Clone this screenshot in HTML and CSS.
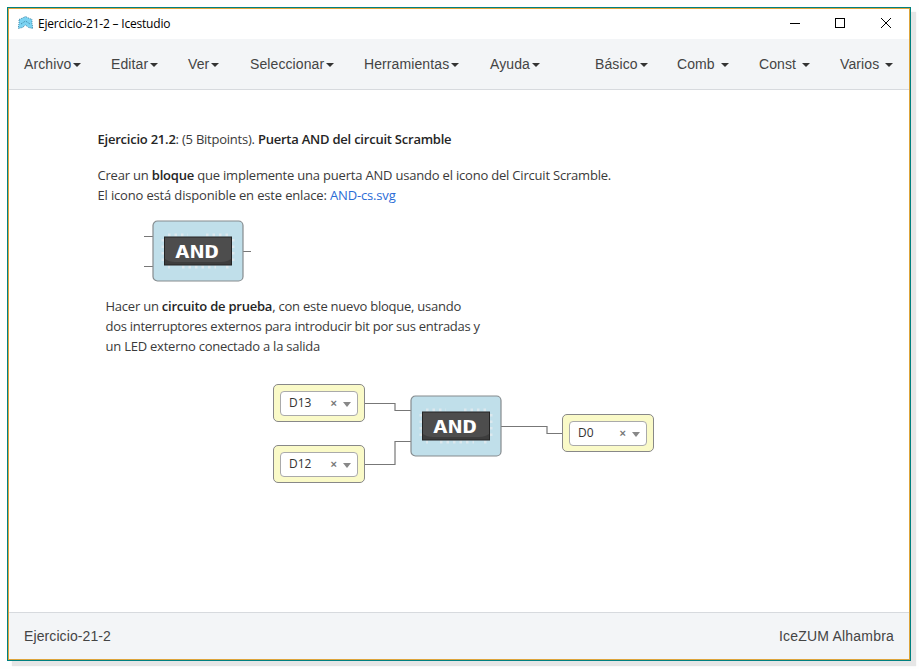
FILE: index.html
```html
<!DOCTYPE html>
<html lang="es">
<head>
<meta charset="utf-8">
<title>Ejercicio-21-2 – Icestudio</title>
<link rel="stylesheet" href="styles.css">
</head>
<body>
<div class="window">
  <header class="titlebar">
    <svg class="logo" width="15" height="13" viewBox="0 0 15 13">
      <path d="M1 3.500l3.500-1.500 3-1.500 3 1.500 3.500 1.500v4l1 5-4.500-1-3-2.500-3 2.500-4.500 1 1-5z" fill="#7bd3f2"/>
      <path d="M1 3.500l3.500-1.500 3-1.500 3 1.500 3.500 1.500v4l1 5-4.500-1-3-2.500-3 2.500-4.500 1 1-5zM3 8l4.500-3 4.500 3" fill="none" stroke="#286f92" stroke-width=".8" stroke-dasharray="1 1"/>
    </svg>
    <span class="title">Ejercicio-21-2 – Icestudio</span>
    <svg class="controls" width="104" height="14" viewBox="0 0 104 14" fill="none" stroke="#000">
      <path d="M0 7.500h10"/><rect x="45.500" y="2.500" width="9" height="9"/><path d="M91 2l10 10M101 2l-10 10"/>
    </svg>
  </header>
  <nav class="menu">
    <a>Archivo</a><a>Editar</a><a>Ver</a><a>Seleccionar</a><a>Herramientas</a><a>Ayuda</a>
    <a>Básico</a><a class="wide">Comb</a><a class="wide">Const</a><a class="wide">Varios</a>
  </nav>
  <main class="canvas">
    <p class="note title-note"><b>Ejercicio 21.2</b>: (5 Bitpoints). <b>Puerta AND del circuit Scramble</b></p>
    <p class="note intro">Crear un <b>bloque</b> que implemente una puerta AND usando el icono del Circuit Scramble.<br><span class="link-line">El icono está disponible en este enlace: <a>AND-cs.svg</a></span></p>
    <p class="note task">Hacer un <b>circuito de prueba</b>, con este nuevo bloque, usando<br><span class="long-line">dos interruptores externos para introducir bit por sus entradas y</span><br>un LED externo conectado a la salida</p>
    <svg class="wires" width="900" height="522" viewBox="9 90 900 522">
      <path d="M144 236.500h9M144 266.500h9M243 251.500h8M364 403.500h31v7h16M364 464.500h31v-23h16M501 426.500h46v7h16" fill="none" stroke="#777" stroke-width="1.200"/>
    </svg>
    <svg class="block sample" width="92" height="62" viewBox="0 0 92 62">
      <rect x="1" y="1" width="90" height="60" rx="4.500" fill="#c0dfea" stroke="#858b8e" stroke-width="1.200"/>
      <path d="M16 15h20M54 15h24M16 47h2M30 47h34M74 47h4" stroke="#dce8ed" stroke-width="3" stroke-dasharray="2.500 4"/>
      <path d="M11 19v26M81 19v26" stroke="#dce8ed" stroke-width="3" stroke-dasharray="2.500 4"/>
      <rect x="12.500" y="17" width="67" height="28" fill="#4d4d4d"/>
      <path d="M13 39q4 3 10 3h46q6 0 10-3v6H13z" fill="#3d3d3d"/>
      <rect x="12.500" y="17" width="67" height="28" fill="none" stroke="#242424"/>
      <text x="23" y="37.500" textLength="44" lengthAdjust="spacingAndGlyphs" class="and-text">AND</text>
    </svg>
    <svg class="block gate" width="92" height="62" viewBox="0 0 92 62">
      <rect x="1" y="1" width="90" height="60" rx="4.500" fill="#c0dfea" stroke="#858b8e" stroke-width="1.200"/>
      <path d="M16 15h20M54 15h24M16 47h2M30 47h34M74 47h4" stroke="#dce8ed" stroke-width="3" stroke-dasharray="2.500 4"/>
      <path d="M11 19v26M81 19v26" stroke="#dce8ed" stroke-width="3" stroke-dasharray="2.500 4"/>
      <rect x="12.500" y="17" width="67" height="28" fill="#4d4d4d"/>
      <path d="M13 39q4 3 10 3h46q6 0 10-3v6H13z" fill="#3d3d3d"/>
      <rect x="12.500" y="17" width="67" height="28" fill="none" stroke="#242424"/>
      <text x="23" y="37.500" textLength="44" lengthAdjust="spacingAndGlyphs" class="and-text">AND</text>
    </svg>
    <div class="pin d13"><div class="select"><span>D13</span><i>×</i></div></div>
    <div class="pin d12"><div class="select"><span>D12</span><i>×</i></div></div>
    <div class="pin d0"><div class="select"><span>D0</span><i>×</i></div></div>
  </main>
  <footer class="status"><span>Ejercicio-21-2</span><span class="board">IceZUM Alhambra</span></footer>
</div>
</body>
</html>
```
FILE: styles.css
```css
* { box-sizing: border-box; }
body { margin: 0; height: 669px; padding: 7px; background: #fefefe; overflow: hidden; font-family: "Liberation Sans", sans-serif; }
.window { width: 904px; height: 654px; display: flex; flex-direction: column; background: #fff; border: 1px solid #008080; box-shadow: inset 0 0 0 1px #dda43b, 5px 5px 1px #e6e6e6; padding: 1px; }
.titlebar { height: 30px; flex: none; display: flex; align-items: center; padding: 0 15px 2px 9px; }
.logo { margin-top: -1px; }
.title { font: 12px "Open Sans", sans-serif; color: #000; margin-left: 5px; letter-spacing: -.2px; }
.controls { margin: -1px 0 0 auto; }
.menu { height: 51px; flex: none; background: #f3f5f7; border-bottom: 1px solid #d7dade; display: grid; grid-template-columns: 87px 77px 62px 114px 126px 105px 82px 82px 81px 60px; align-items: center; padding-left: 15px; font-size: 14px; color: #444; }
.menu a { white-space: nowrap; letter-spacing: .1px; }
.menu a::after { content: ""; display: inline-block; margin-left: 2px; vertical-align: 2px; border: 4px solid transparent; border-top-color: #333; border-bottom: 0; }
.menu .wide::after { margin-left: 6px; }
.canvas { height: 522px; flex: none; position: relative; }
.note { position: absolute; margin: 0; font: 13px/20px "Open Sans", sans-serif; letter-spacing: -.2px; color: #3a3a3a; white-space: nowrap; }
.note b { font-weight: 600; color: #252525; }
.note a { color: #2a6cd6; }
.title-note { left: 88.500px; top: 39px; letter-spacing: -.23px; }
.intro { left: 88.500px; top: 75px; }
.link-line { letter-spacing: -.16px; }
.task { left: 96.500px; top: 206px; letter-spacing: -.23px; }
.long-line { letter-spacing: -.27px; }
.wires { position: absolute; left: 0; top: 0; }
.block { position: absolute; }
.sample { left: 143px; top: 130px; }
.gate { left: 401px; top: 305px; }
.and-text { font: bold 17px "DejaVu Sans Mono", monospace; fill: #fff; }
.pin { position: absolute; width: 92px; height: 38px; border: 1px solid #888; border-radius: 5px; background: #fafac8; padding: 6px; }
.d13 { left: 264px; top: 294px; }
.d12 { left: 264px; top: 355px; }
.d0 { left: 553px; top: 324px; }
.select { width: 78px; height: 25px; border: 1px solid #aaa; border-radius: 4px; background: #fff; display: flex; align-items: center; padding: 0 6px 2px 8px; font: 12px "Open Sans", sans-serif; color: #333; }
.select i { margin-left: auto; font: bold 11px "Liberation Sans", sans-serif; color: #777; }
.select::after { content: ""; margin: 4px 0 0 6px; border: 4px solid transparent; border-top: 5px solid #888; border-bottom: 0; }
.status { height: 47px; flex: none; background: #f3f5f7; border-top: 1px solid #d7dade; display: flex; justify-content: space-between; align-items: center; padding: 0 15px; font-size: 14px; color: #444; letter-spacing: .1px; }
.board { letter-spacing: .2px; }
```
